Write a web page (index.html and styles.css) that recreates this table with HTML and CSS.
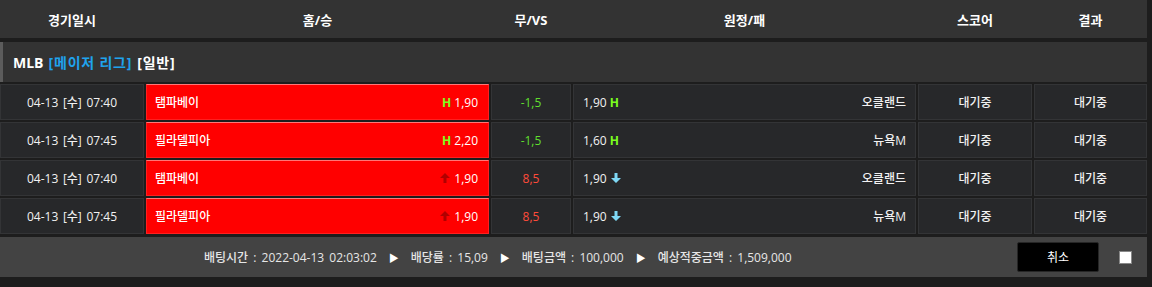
FILE: index.html
```html
<!DOCTYPE html>
<html lang="ko">
<head>
<meta charset="utf-8">
<title>Bet slip</title>
<link rel="stylesheet" href="styles.css">
</head>
<body>
<div class="board">
  <div class="head grid">
    <div>경기일시</div>
    <div>홈/승</div>
    <div>무/VS</div>
    <div>원정/패</div>
    <div>스코어</div>
    <div>결과</div>
  </div>
  <div class="league"><span>MLB</span><span class="tag blue">[메이저 리그]</span><span class="tag">[일반]</span></div>
  <div class="rows">
    <div class="row grid">
      <div class="cell center date">04-13 [수] 07:40</div>
      <div class="cell home"><span>탬파베이</span><span class="odd"><b class="h">H</b>1,90</span></div>
      <div class="cell center green">-1,5</div>
      <div class="cell away"><span class="odd">1,90<b class="h">H</b></span><span>오클랜드</span></div>
      <div class="cell center">대기중</div>
      <div class="cell center">대기중</div>
    </div>
    <div class="row grid">
      <div class="cell center date">04-13 [수] 07:45</div>
      <div class="cell home"><span>필라델피아</span><span class="odd"><b class="h">H</b>2,20</span></div>
      <div class="cell center green">-1,5</div>
      <div class="cell away"><span class="odd">1,60<b class="h">H</b></span><span>뉴욕M</span></div>
      <div class="cell center">대기중</div>
      <div class="cell center">대기중</div>
    </div>
    <div class="row grid">
      <div class="cell center date">04-13 [수] 07:40</div>
      <div class="cell home"><span>탬파베이</span><span class="odd"><svg class="up" width="10" height="10" viewBox="0 0 10 10"><path d="M5 0 L10 5 L6.5 5 L6.5 10 L3.5 10 L3.5 5 L0 5 Z" fill="#b00000"/></svg>1,90</span></div>
      <div class="cell center red">8,5</div>
      <div class="cell away"><span class="odd">1,90<svg class="down" width="10" height="10" viewBox="0 0 10 10"><path d="M5 10 L10 5 L6.5 5 L6.5 0 L3.5 0 L3.5 5 L0 5 Z" fill="#7fd8f5"/></svg></span><span>오클랜드</span></div>
      <div class="cell center">대기중</div>
      <div class="cell center">대기중</div>
    </div>
    <div class="row grid">
      <div class="cell center date">04-13 [수] 07:45</div>
      <div class="cell home"><span>필라델피아</span><span class="odd"><svg class="up" width="10" height="10" viewBox="0 0 10 10"><path d="M5 0 L10 5 L6.5 5 L6.5 10 L3.5 10 L3.5 5 L0 5 Z" fill="#b00000"/></svg>1,90</span></div>
      <div class="cell center red">8,5</div>
      <div class="cell away"><span class="odd">1,90<svg class="down" width="10" height="10" viewBox="0 0 10 10"><path d="M5 10 L10 5 L6.5 5 L6.5 0 L3.5 0 L3.5 5 L0 5 Z" fill="#7fd8f5"/></svg></span><span>뉴욕M</span></div>
      <div class="cell center">대기중</div>
      <div class="cell center">대기중</div>
    </div>
  </div>
  <div class="foot">
    <div class="info">
      <span>배팅시간 : 2022-04-13 02:03:02</span><span class="tri">▶</span>
      <span>배당률 : 15,09</span><span class="tri">▶</span>
      <span>배팅금액 : 100,000</span><span class="tri">▶</span>
      <span>예상적중금액 : 1,509,000</span>
    </div>
    <button class="cancel">취소</button>
    <span class="check"></span>
  </div>
</div>
</body>
</html>
```

FILE: styles.css
```css
html, body {
  margin: 0;
  padding: 0;
  background: #1d1d1d;
}
body {
  font-family: "Open Sans", "Noto Sans CJK KR", sans-serif;
  font-size: 12px;
  font-weight: 500;
  color: #f0f0f0;
}
.board {
  width: 1147px;
}
.grid {
  display: grid;
  grid-template-columns: 144px 343px 80px 343px 114px 113px;
  column-gap: 2px;
}
.head {
  height: 38px;
  background: #333333;
  margin-bottom: 4px;
  font-weight: bold;
  font-size: 13px;
  color: #ffffff;
}
.head > div {
  display: flex;
  align-items: center;
  justify-content: center;
}
.league {
  height: 40px;
  box-sizing: border-box;
  background: #333333;
  border-left: 3px solid #5c5c5c;
  padding-left: 10px;
  display: flex;
  align-items: center;
  gap: 5px;
  font-weight: bold;
  font-size: 14px;
  color: #ffffff;
  margin-bottom: 2px;
}
.tag {
  letter-spacing: 0.8px;
}
.blue {
  color: #1fa3ee;
}
.rows {
  display: flex;
  flex-direction: column;
  gap: 2px;
}
.row {
  height: 36px;
}
.cell {
  box-sizing: border-box;
  background: #27282a;
  border: 1px solid #333436;
  display: flex;
  align-items: center;
  color: #f2f2f2;
}
.center {
  justify-content: center;
}
.date {
  word-spacing: 1.5px;
}
.home {
  background: #ff0000;
  border: 1px solid #ff2020;
  border-top-color: #ff7777;
  justify-content: space-between;
  padding: 0 10px 0 8px;
  color: #ffffff;
}
.away {
  justify-content: space-between;
  padding: 0 9px 0 9px;
}
.odd {
  display: flex;
  align-items: center;
  gap: 3px;
}
.h {
  color: #7cff1e;
  font-weight: bold;
  font-size: 12px;
}
.up, .down {
  margin: 0 1px;
}
.green {
  color: #5fdd2e;
}
.red {
  color: #ff4b3a;
}
.foot {
  margin-top: 3px;
  height: 40px;
  background: #434343;
  display: flex;
  align-items: center;
}
.info {
  margin-left: 204px;
  display: flex;
  align-items: center;
  gap: 12px;
  color: #e6e6e6;
  font-size: 12px;
  word-spacing: 2px;
}
.tri {
  font-size: 10px;
  color: #ffffff;
}
.cancel {
  margin-left: auto;
  width: 82px;
  height: 30px;
  background: #000000;
  border: 1px solid #262626;
  border-radius: 2px;
  color: #ffffff;
  font-family: inherit;
  font-size: 12px;
  padding: 0;
}
.check {
  width: 13px;
  height: 13px;
  box-sizing: border-box;
  background: #ffffff;
  border: 1px solid #888888;
  margin-left: 20px;
  margin-right: 15px;
}
```
